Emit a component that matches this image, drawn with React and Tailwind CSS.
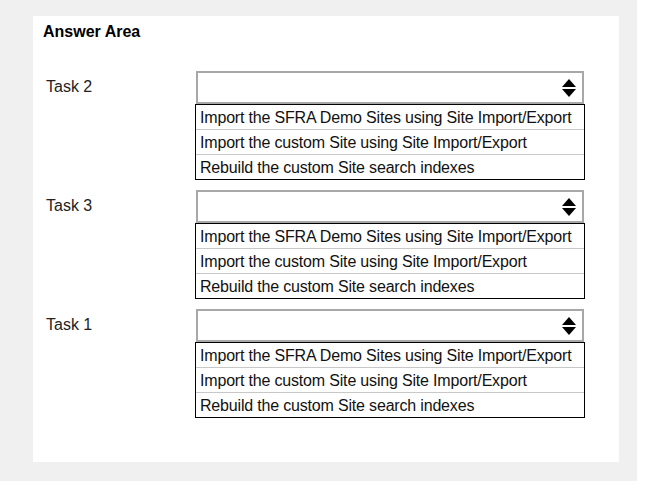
import React from "react";

const options = [
  "Import the SFRA Demo Sites using Site Import/Export",
  "Import the custom Site using Site Import/Export",
  "Rebuild the custom Site search indexes",
];

function Arrows() {
  return (
    <svg width="16" height="20" viewBox="0 0 16 20" className="block">
      <polygon points="8,1 15,9 1,9" fill="#000" />
      <polygon points="1,11 15,11 8,19" fill="#000" />
    </svg>
  );
}

function Task({ label }) {
  return (
    <div className="flex">
      <div className="w-[162px] pl-[13px] pt-[7px] text-[16px] leading-[18px] text-[#222]">{label}</div>
      <div className="flex flex-col">
        <div className="ml-[1px] flex h-[33px] w-[388px] items-center justify-end border-2 border-[#a8a8a8] bg-white pr-[5px]">
          <Arrows />
        </div>
        <div className="flex w-[390px] flex-col border border-black bg-white">
          <div className="h-[25px] border-b border-[#c8c8c8] pl-[4px] pt-[1px] text-[16px] leading-[23px] tracking-[-0.18px] text-[#111]">{options[0]}</div>
          <div className="h-[25px] border-b border-[#c8c8c8] pl-[4px] pt-[1px] text-[16px] leading-[23px] tracking-[-0.18px] text-[#111]">{options[1]}</div>
          <div className="h-[24px] pl-[4px] pt-[1px] text-[16px] leading-[23px] tracking-[-0.18px] text-[#111]">{options[2]}</div>
        </div>
      </div>
    </div>
  );
}

export default function App() {
  return (
    <div className="h-[500px] w-[658px] bg-white" style={{ fontFamily: '"Liberation Sans", Arial, sans-serif' }}>
      <div className="h-[481px] w-[637px] bg-[#f0f0f0] pl-[33px] pt-[16px]">
        <div className="flex h-[446px] w-[586px] flex-col bg-white pt-[6px]">
          <div className="pl-[10px] text-[16px] font-bold leading-[19px] text-black">Answer Area</div>
          <div className="mt-[30px] flex flex-col gap-[10px]">
            <Task label="Task 2" />
            <Task label="Task 3" />
            <Task label="Task 1" />
          </div>
        </div>
      </div>
    </div>
  );
}
